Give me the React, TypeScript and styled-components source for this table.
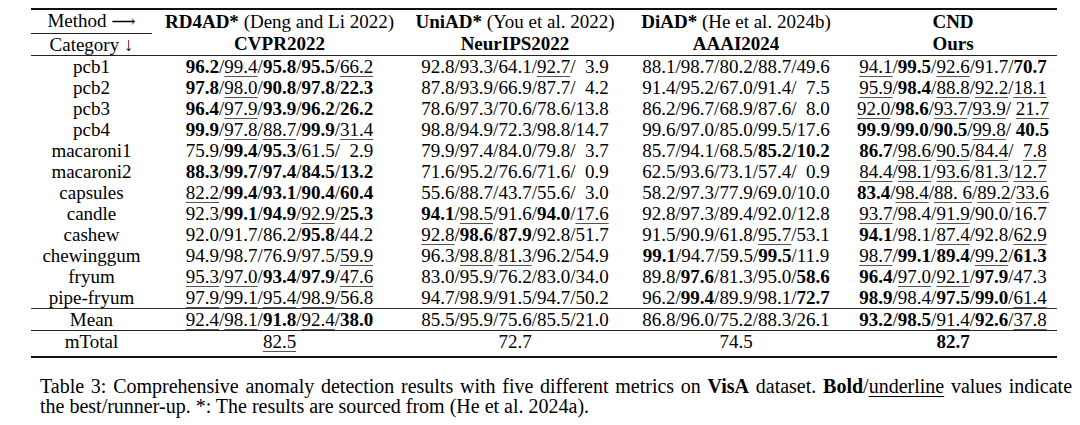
import React from 'react';
import styled, { createGlobalStyle } from 'styled-components';

const GlobalStyle = createGlobalStyle`
  html, body {
    margin: 0;
    padding: 0;
    background: #ffffff;
  }
  body {
    font-family: "Liberation Serif", "Times New Roman", "DejaVu Serif", serif;
    color: #000000;
  }
`;

const Page = styled.div`
  width: 1080px;
  height: 425px;
  padding-top: 8px;
  box-sizing: border-box;
  overflow: hidden;
`;

const Table = styled.table`
  margin-left: 31px;
  width: 1026px;
  table-layout: fixed;
  border-collapse: collapse;
  border-top: 2px solid #111;
  border-bottom: 2px solid #111;
  font-size: 19px;
  line-height: 21px;
`;

const Col = styled.col<{ $w: number }>`
  width: ${(p) => p.$w}px;
`;

const Row = styled.tr<{ $h?: number; $ruleTop?: boolean; $ruleBottom?: boolean }>`
  height: ${(p) => p.$h ?? 21}px;
  border-top: ${(p) => (p.$ruleTop ? '1px solid #333' : 'none')};
  border-bottom: ${(p) => (p.$ruleBottom ? '1px solid #222' : 'none')};
`;

const Cell = styled.td<{ $cmid?: boolean; $padBottom?: number }>`
  padding: 0 0 ${(p) => p.$padBottom ?? 0}px 0;
  text-align: center;
  white-space: nowrap;
  vertical-align: middle;
  font-weight: normal;
  border-bottom: ${(p) => (p.$cmid ? '1px solid #222' : 'none')};
`;

const Strong = styled.b`
  font-weight: bold;
`;

const Arrow = styled.span`
  font-family: "DejaVu Serif", "Liberation Serif", serif;
  font-size: 17px;
`;

const Metric = styled.span<{ $kind: string }>`
  font-weight: ${(p) => (p.$kind === 'b' ? 'bold' : 'normal')};
  text-decoration: ${(p) => (p.$kind === 'u' ? 'underline' : 'none')};
  text-decoration-thickness: 1px;
  text-underline-offset: 3px;
  text-decoration-color: #555;
`;

const Phantom = styled.span`
  visibility: hidden;
`;

const Caption = styled.div`
  margin: 18px 0 0 40px;
  width: 1032px;
  font-size: 20px;
  line-height: 20px;
`;

const CaptionLine = styled.div<{ $justify?: boolean }>`
  text-align: ${(p) => (p.$justify ? 'justify' : 'left')};
  text-align-last: ${(p) => (p.$justify ? 'justify' : 'left')};
`;

const Under = styled.span`
  text-decoration: underline;
  text-decoration-thickness: 1px;
  text-underline-offset: 3px;
`;

// prefix: ~ = leading space, then b/u/n, then _ = phantom digit
const rows: string[][] = [
  ['pcb1', 'b96.2/u99.4/b95.8/b95.5/u66.2', 'n92.8/n93.3/n64.1/u92.7/n_3.9', 'n88.1/n98.7/n80.2/n88.7/n49.6', 'u94.1/b99.5/u92.6/n91.7/b70.7'],
  ['pcb2', 'b97.8/u98.0/b90.8/b97.8/b22.3', 'n87.8/n93.9/n66.9/n87.7/n_4.2', 'n91.4/n95.2/n67.0/n91.4/n_7.5', 'u95.9/b98.4/u88.8/u92.2/u18.1'],
  ['pcb3', 'b96.4/u97.9/b93.9/b96.2/b26.2', 'n78.6/n97.3/n70.6/n78.6/n13.8', 'n86.2/n96.7/n68.9/n87.6/n_8.0', 'u92.0/b98.6/u93.7/u93.9/~u21.7'],
  ['pcb4', 'b99.9/u97.8/u88.7/b99.9/u31.4', 'n98.8/n94.9/n72.3/n98.8/n14.7', 'n99.6/n97.0/n85.0/n99.5/n17.6', 'b99.9/b99.0/b90.5/u99.8/~b40.5'],
  ['macaroni1', 'n75.9/b99.4/b95.3/n61.5/n_2.9', 'n79.9/n97.4/n84.0/n79.8/n_3.7', 'n85.7/n94.1/n68.5/b85.2/b10.2', 'b86.7/u98.6/u90.5/u84.4/u_7.8'],
  ['macaroni2', 'b88.3/b99.7/b97.4/b84.5/b13.2', 'n71.6/n95.2/n76.6/n71.6/n_0.9', 'n62.5/n93.6/n73.1/n57.4/n_0.9', 'u84.4/u98.1/u93.6/u81.3/u12.7'],
  ['capsules', 'u82.2/b99.4/b93.1/b90.4/b60.4', 'n55.6/n88.7/n43.7/n55.6/n_3.0', 'n58.2/n97.3/n77.9/n69.0/n10.0', 'b83.4/u98.4/u88. 6/u89.2/u33.6'],
  ['candle', 'n92.3/b99.1/b94.9/u92.9/b25.3', 'b94.1/u98.5/n91.6/b94.0/u17.6', 'n92.8/n97.3/n89.4/n92.0/n12.8', 'u93.7/n98.4/u91.9/n90.0/n16.7'],
  ['cashew', 'n92.0/n91.7/n86.2/b95.8/n44.2', 'u92.8/b98.6/b87.9/n92.8/n51.7', 'n91.5/n90.9/n61.8/u95.7/n53.1', 'b94.1/n98.1/u87.4/n92.8/u62.9'],
  ['chewinggum', 'n94.9/n98.7/n76.9/n97.5/u59.9', 'n96.3/u98.8/u81.3/n96.2/n54.9', 'b99.1/n94.7/n59.5/b99.5/n11.9', 'u98.7/b99.1/b89.4/u99.2/b61.3'],
  ['fryum', 'u95.3/u97.0/b93.4/b97.9/u47.6', 'n83.0/n95.9/n76.2/n83.0/n34.0', 'n89.8/b97.6/n81.3/n95.0/b58.6', 'b96.4/u97.0/u92.1/b97.9/n47.3'],
  ['pipe-fryum', 'u97.9/u99.1/u95.4/u98.9/n56.8', 'n94.7/n98.9/n91.5/n94.7/n50.2', 'n96.2/b99.4/n89.9/n98.1/b72.7', 'b98.9/n98.4/b97.5/b99.0/u61.4'],
];

const meanRow = ['Mean', 'u92.4/u98.1/b91.8/u92.4/b38.0', 'n85.5/n95.9/n75.6/n85.5/n21.0', 'n86.8/n96.0/n75.2/n88.3/n26.1', 'b93.2/b98.5/u91.4/b92.6/u37.8'];
const totalRow = ['mTotal', 'u82.5', 'n72.7', 'n74.5', 'b82.7'];

const Scores: React.FC<{ spec: string }> = ({ spec }) => {
  const parts = spec.split('/');
  return (
    <>
      {parts.map((raw, i) => {
        let t = raw;
        const space = t.startsWith('~');
        if (space) t = t.slice(1);
        const kind = t[0];
        t = t.slice(1);
        const phantom = t.startsWith('_');
        if (phantom) t = t.slice(1);
        return (
          <React.Fragment key={i}>
            {i > 0 && '/'}
            {space && ' '}
            {phantom && <Phantom>0</Phantom>}
            <Metric $kind={kind}>{t}</Metric>
          </React.Fragment>
        );
      })}
    </>
  );
};

const App: React.FC = () => {
  return (
    <Page>
      <GlobalStyle />
      <Table>
        <colgroup>
          <Col $w={121} />
          <Col $w={255} />
          <Col $w={216} />
          <Col $w={226} />
          <Col $w={208} />
        </colgroup>
        <tbody>
          <Row $h={24}>
            <Cell $cmid>
              Method <Arrow>⟶</Arrow>
            </Cell>
            <Cell>
              <Strong>RD4AD*</Strong> (Deng and Li 2022)
            </Cell>
            <Cell>
              <Strong>UniAD*</Strong> (You et al. 2022)
            </Cell>
            <Cell>
              <Strong>DiAD*</Strong> (He et al. 2024b)
            </Cell>
            <Cell>
              <Strong>CND</Strong>
            </Cell>
          </Row>
          <Row $ruleBottom>
            <Cell>Category ↓</Cell>
            <Cell>
              <Strong>CVPR2022</Strong>
            </Cell>
            <Cell>
              <Strong>NeurIPS2022</Strong>
            </Cell>
            <Cell>
              <Strong>AAAI2024</Strong>
            </Cell>
            <Cell>
              <Strong>Ours</Strong>
            </Cell>
          </Row>
          {rows.map((r) => (
            <Row key={r[0]}>
              <Cell>{r[0]}</Cell>
              {r.slice(1).map((s, j) => (
                <Cell key={j}>
                  <Scores spec={s} />
                </Cell>
              ))}
            </Row>
          ))}
          <Row $ruleTop $ruleBottom>
            <Cell>{meanRow[0]}</Cell>
            {meanRow.slice(1).map((s, j) => (
              <Cell key={j}>
                <Scores spec={s} />
              </Cell>
            ))}
          </Row>
          <Row $h={24}>
            <Cell $padBottom={4}>{totalRow[0]}</Cell>
            {totalRow.slice(1).map((s, j) => (
              <Cell key={j} $padBottom={4}>
                <Scores spec={s} />
              </Cell>
            ))}
          </Row>
        </tbody>
      </Table>
      <Caption>
        <CaptionLine $justify>
          Table 3: Comprehensive anomaly detection results with five different metrics on <Strong>VisA</Strong> dataset.{' '}
          <Strong>Bold</Strong>/<Under>underline</Under> values indicate
        </CaptionLine>
        <CaptionLine>the best/runner-up. *: The results are sourced from (He et al. 2024a).</CaptionLine>
      </Caption>
    </Page>
  );
};

export default App;
